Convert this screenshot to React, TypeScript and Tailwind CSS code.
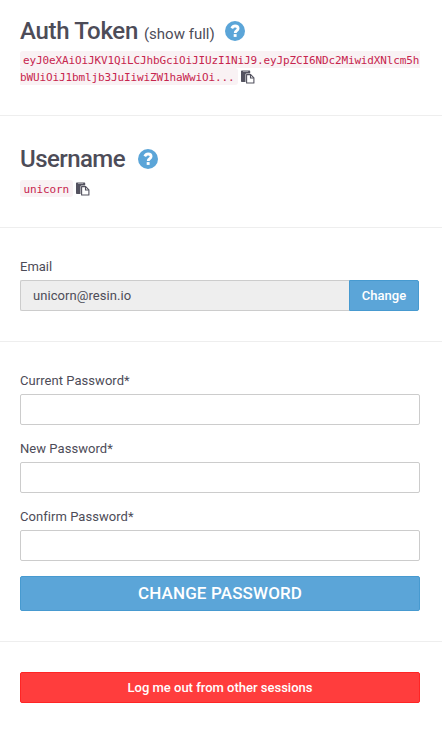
import type { ReactNode } from "react";

function Help() {
  return (
    <svg className="h-5 w-5 shrink-0" viewBox="0 0 20 20">
      <circle cx="10" cy="10" r="10" fill="#5ba5d8" />
      <path d="M6.8 7.3C7.5 5.8 8.6 5 10.1 5c1.8 0 3 1 3 2.500 0 2.200-2.900 2-2.900 4.400" fill="none" stroke="#fff" strokeWidth="2.8" />
      <rect x="8.7" y="13.1" width="2.9" height="2.8" fill="#fff" />
    </svg>
  );
}

function Paste() {
  return (
    <svg className="h-[14px] w-[14px] shrink-0" viewBox="0 0 14 14">
      <path d="M0 1.200Q0 .4.8.4H8.500Q9.200.4 9.200 1.200V3.500H5.500Q4.500 3.500 4.500 4.500V12H.8Q0 12 0 11.200Z" fill="#53525f" />
      <path d="M2 1.500H7.200" stroke="#aaa9b0" strokeWidth=".8" />
      <path d="M5.600 4.600H9.700L12.900 7.800V13H5.600Z" fill="#fff" stroke="#53525f" strokeWidth="1.100" strokeLinejoin="round" />
      <path d="M9.500 4.600V8H12.900" fill="none" stroke="#53525f" strokeWidth="1.100" />
    </svg>
  );
}

const code = "bg-[#f9f2f4] font-['DejaVu_Sans_Mono',monospace] text-[11px] tracking-[-0.125px] text-[#c7254e]";

function Field({ label }: { label: string }) {
  return (
    <label className="mb-[14px] block">
      <span className="block h-[23px] pt-px leading-[18px] tracking-[0.05px]">{label}</span>
      <input type="password" className="block h-[31px] w-full rounded-[2px] border border-[#ccc] bg-white px-3 outline-none" />
    </label>
  );
}

function Section({ className, children }: { className: string; children: ReactNode }) {
  return <section className={`border-b border-[#eee] pl-5 pr-[22px] ${className}`}>{children}</section>;
}

export default function App() {
  return (
    <main className="h-[732px] w-[442px] overflow-hidden bg-white font-[Roboto,sans-serif] text-[13px] text-[#4d4c58]">
      <Section className="h-[116px] pt-[17px]">
        <h2 className="flex h-[28px] items-center text-[24px] font-medium leading-[28px]">
          <span className="tracking-[-0.3px]">Auth Token</span>
          <span className="ml-[6px] pt-[5px] text-[15px] font-normal">(show full)</span>
          <span className="ml-[10px]"><Help /></span>
        </h2>
        <div className="mt-[6px] flex h-[34px] flex-col whitespace-nowrap">
          <code className={`${code} h-[17px] w-[400px] rounded-l-[3px] pl-[3px] leading-[20px]`}>eyJ0eXAiOiJKV1QiLCJhbGciOiJIUzI1NiJ9.eyJpZCI6NDc2MiwidXNlcm5h</code>
          <div className="flex h-[17px] items-center">
            <code className={`${code} h-[17px] rounded-r-[3px] pr-1 leading-[20px]`}>bWUiOiJ1bmljb3JuIiwiZW1haWwiOi...</code>
            <span className="ml-[3px]"><Paste /></span>
          </div>
        </div>
      </Section>
      <Section className="h-[112px] pt-[29px]">
        <h2 className="flex h-[28px] items-center text-[24px] font-medium leading-[28px]">
          <span className="tracking-[-0.56px]">Username</span><span className="ml-[13px]"><Help /></span>
        </h2>
        <div className="mt-[7px] flex h-[17px] items-center">
          <code className={`${code} h-[17px] w-[53px] rounded-[3px] pl-[3.5px] leading-[20px]`}>unicorn</code>
          <span className="ml-[3px]"><Paste /></span>
        </div>
      </Section>
      <Section className="h-[114px] pt-[29px]">
        <div className="h-[23px] pt-px leading-[18px]">Email</div>
        <div className="flex h-[31px] w-[399px]">
          <input readOnly value="unicorn@resin.io" className="min-w-0 flex-1 rounded-l-[2px] border border-r-0 border-[#ccc] bg-[#eee] pl-[12px] tracking-[0.06px] outline-none" />
          <button className="w-[70px] rounded-r-[2px] border border-[#479ad0] bg-[#5ba5d8] font-medium text-white">Change</button>
        </div>
      </Section>
      <Section className="h-[300px] pt-[29px]">
        <Field label="Current Password*" />
        <Field label="New Password*" />
        <Field label="Confirm Password*" />
        <button className="mt-[15px] block h-[35px] w-full rounded-[2px] border border-[#479ad0] bg-[#5ba5d8] pt-px text-[17px] font-medium tracking-[0.15px] text-white">CHANGE PASSWORD</button>
      </Section>
      <div className="pl-5 pr-[22px] pt-[30px]">
        <button className="block h-[31px] w-full rounded-[2px] border border-[#ff2525] bg-[#ff3d3d] font-medium text-white">Log me out from other sessions</button>
      </div>
    </main>
  );
}
